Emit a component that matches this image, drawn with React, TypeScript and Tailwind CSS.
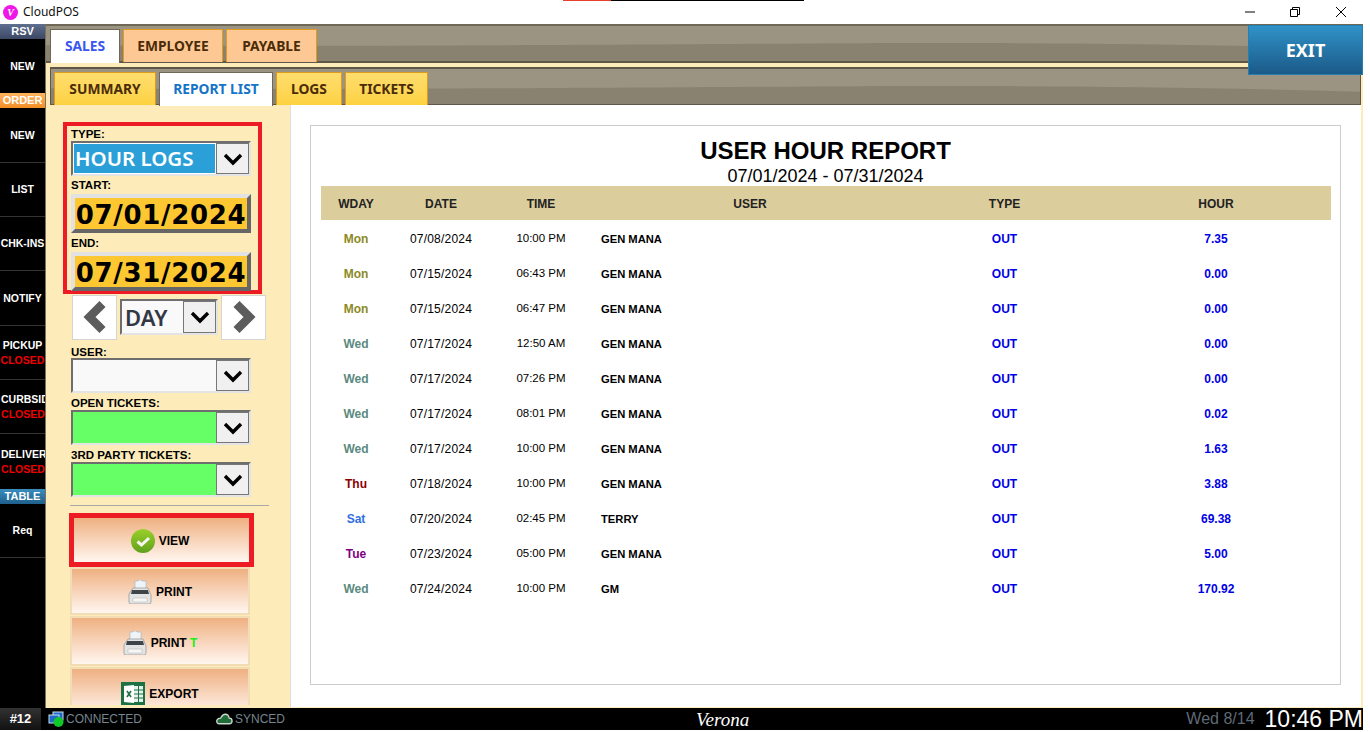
import type { ReactNode } from "react";

const SIDE_FONT = "font-['Liberation_Sans',sans-serif]";
const UI_FONT = "font-['Noto_Sans',sans-serif]";

const rows = [
	{ day: "Mon", color: "text-[#8c8a24]", date: "07/08/2024", time: "10:00 PM", user: "GEN MANA", hour: "7.35" },
	{ day: "Mon", color: "text-[#8c8a24]", date: "07/15/2024", time: "06:43 PM", user: "GEN MANA", hour: "0.00" },
	{ day: "Mon", color: "text-[#8c8a24]", date: "07/15/2024", time: "06:47 PM", user: "GEN MANA", hour: "0.00" },
	{ day: "Wed", color: "text-[#5a8a80]", date: "07/17/2024", time: "12:50 AM", user: "GEN MANA", hour: "0.00" },
	{ day: "Wed", color: "text-[#5a8a80]", date: "07/17/2024", time: "07:26 PM", user: "GEN MANA", hour: "0.00" },
	{ day: "Wed", color: "text-[#5a8a80]", date: "07/17/2024", time: "08:01 PM", user: "GEN MANA", hour: "0.02" },
	{ day: "Wed", color: "text-[#5a8a80]", date: "07/17/2024", time: "10:00 PM", user: "GEN MANA", hour: "1.63" },
	{ day: "Thu", color: "text-[#8b0000]", date: "07/18/2024", time: "10:00 PM", user: "GEN MANA", hour: "3.88" },
	{ day: "Sat", color: "text-[#2f6fe0]", date: "07/20/2024", time: "02:45 PM", user: "TERRY", hour: "69.38" },
	{ day: "Tue", color: "text-[#800080]", date: "07/23/2024", time: "05:00 PM", user: "GEN MANA", hour: "5.00" },
	{ day: "Wed", color: "text-[#5a8a80]", date: "07/24/2024", time: "10:00 PM", user: "GM", hour: "170.92" },
];

function Wave() {
	return (
		<svg
			className="absolute inset-0 h-full w-full"
			viewBox="0 0 1300 40"
			preserveAspectRatio="none"
		>
			<path
				d="M0 22 C 300 24 600 21 760 20 C 900 19 1100 19 1300 26 L1300 40 L0 40 Z"
				fill="#8a8270"
			/>
		</svg>
	);
}

function SideHeader({ label, className }: { label: string; className: string }) {
	return (
		<div
			className={`flex h-[15px] items-center justify-center text-[11px] font-bold text-white ${className}`}
		>
			{label}
		</div>
	);
}

function SideItem({
	label,
	closed,
	height = "h-[54px]",
	line = true,
	left,
}: {
	label: string;
	closed?: boolean;
	height?: string;
	line?: boolean;
	left?: boolean;
}) {
	return (
		<div
			className={`flex flex-col justify-center overflow-hidden whitespace-nowrap text-[10.5px] font-bold leading-[15px] text-white ${height} ${line ? "border-b border-[#333]" : ""} ${left ? "pl-px text-left" : "text-center"}`}
		>
			<span>{label}</span>
			{closed && <span className="text-center text-[#f00000]">CLOSED</span>}
		</div>
	);
}

function TopTab({
	label,
	active,
	width,
	text,
	bg,
	border,
}: {
	label: string;
	active?: boolean;
	width: string;
	text: string;
	bg: string;
	border: string;
}) {
	return (
		<div
			className={`relative z-10 flex items-center justify-center border border-b-0 text-[13.8px] font-bold ${UI_FONT} ${width} ${text} ${bg} ${border} ${active ? "h-[34px]" : "h-[33px]"}`}
		>
			{label}
		</div>
	);
}

function Chevron() {
	return (
		<svg viewBox="0 0 20 14" className="h-[14px] w-[20px]">
			<path d="M2 3 L10 11 L18 3" fill="none" stroke="#000" strokeWidth="3.4" />
		</svg>
	);
}

function Select({
	bg,
	width = "w-[180px]",
	height = "h-[35px]",
	arrow = "w-[33px]",
	children,
}: {
	bg: string;
	width?: string;
	height?: string;
	arrow?: string;
	children?: ReactNode;
}) {
	return (
		<div
			className={`flex border-2 border-b-[#e4e4e4] border-l-[#6e6e6e] border-r-[#e4e4e4] border-t-[#6e6e6e] ${width} ${height}`}
		>
			<div className={`min-w-0 flex-1 overflow-hidden ${bg}`}>{children}</div>
			<div
				className={`flex shrink-0 items-center justify-center border border-[#777] bg-[#f0f0f0] ${arrow}`}
			>
				<Chevron />
			</div>
		</div>
	);
}

function DateBox({ value }: { value: string }) {
	return (
		<div className="flex h-[39px] w-[180px] items-center justify-center whitespace-nowrap border-4 border-b-[#666] border-l-[#e2e2e2] border-r-[#666] border-t-[#e2e2e2] bg-[#fdc731] pt-[3px] font-['DejaVu_Sans',sans-serif] text-[26px] font-bold tracking-[0.7px] text-black">
			{value}
		</div>
	);
}

function Label({ text, height }: { text: string; height: string }) {
	return (
		<div
			className={`flex items-center text-[11.5px] font-bold leading-none text-black ${SIDE_FONT} ${height}`}
		>
			{text}
		</div>
	);
}

function Pager({ dir }: { dir: "left" | "right" }) {
	return (
		<div className="flex h-[45px] w-[45px] shrink-0 items-center justify-center border border-[#d4d4d4] bg-white">
			<svg viewBox="0 0 24 32" className="h-[32px] w-[24px]">
				<path
					d={dir === "left" ? "M19.5 3 L6.5 16 L19.5 29" : "M4.5 3 L17.5 16 L4.5 29"}
					fill="none"
					stroke="#5c5c5c"
					strokeWidth="8.5"
				/>
			</svg>
		</div>
	);
}

function Printer() {
	return (
		<svg viewBox="0 0 24 24" className="h-[24px] w-[24px]">
			<path d="M7 1 H10 L11 0 H13 L14 1 H18 V9 H7 Z" fill="#eef4f8" stroke="#9fb4c4" strokeWidth="0.6" />
			<path d="M5 8 H20 L23 15 V22 Q23 24 21 24 H3 Q1 24 1 22 V14 Z" fill="#e4e4e4" stroke="#8f8f8f" strokeWidth="0.7" />
			<path d="M4 10 H20 L21 14 H3 Z" fill="#3f4448" />
			<rect x="5" y="18" width="14" height="4" rx="0.5" fill="#f6f6f6" stroke="#b0b0b0" strokeWidth="0.5" />
		</svg>
	);
}

function Excel() {
	return (
		<svg viewBox="0 0 24 24" className="h-[24px] w-[24px]">
			<rect width="24" height="24" fill="#1d7245" />
			<path d="M13 4 H22 V20 H13 Z" fill="#e8f2ec" />
			<path
				d="M13 8 H22 M13 12 H22 M13 16 H22 M17.5 4 V20"
				stroke="#1d7245"
				strokeWidth="1"
			/>
			<path d="M3 4 L13 3 V21 L3 20 Z" fill="#fff" />
			<path d="M6 9 L10 15 M10 9 L6 15" stroke="#1d7245" strokeWidth="1.6" />
		</svg>
	);
}

function Check() {
	return (
		<svg viewBox="0 0 24 24" className="h-[24px] w-[24px]">
			<defs>
				<linearGradient id="view-check" x1="0" y1="0" x2="0" y2="1">
					<stop offset="0" stopColor="#9ad02a" />
					<stop offset="1" stopColor="#62a01c" />
				</linearGradient>
			</defs>
			<circle cx="12" cy="12" r="12" fill="url(#view-check)" />
			<path d="M6.5 12.5 L10.5 16 L18 9" fill="none" stroke="#f4f6f0" strokeWidth="3" />
		</svg>
	);
}

function ActionButton({
	height,
	children,
}: {
	height: string;
	children: ReactNode;
}) {
	return (
		<div
			className={`ml-[24px] flex w-[180px] shrink-0 items-center justify-center gap-[4px] border-2 border-[#f1dcb4] bg-gradient-to-b from-[#eeb081] to-[#fff6f0] text-[12px] font-bold text-black ${SIDE_FONT} ${height}`}
		>
			{children}
		</div>
	);
}

function ReportTable() {
	return (
		<div className={`ml-[10px] mr-[9px] text-[12px] text-black ${SIDE_FONT}`}>
			<div className="grid h-[34px] grid-cols-[70px_100px_100px_318px_191px_230px] items-center bg-[#dccd9c] pt-px text-center font-bold text-[#222]">
				<div>WDAY</div>
				<div>DATE</div>
				<div>TIME</div>
				<div>USER</div>
				<div>TYPE</div>
				<div className="pl-[2px]">HOUR</div>
			</div>
			{rows.map((r, i) => (
				<div
					key={i}
					className="grid h-[35px] grid-cols-[70px_100px_100px_318px_191px_230px] items-center pt-[2px] text-center"
				>
					<div className={`font-bold ${r.color}`}>{r.day}</div>
					<div className="tracking-[0.2px]">{r.date}</div>
					<div className="text-[11.5px]">{r.time}</div>
					<div className="pl-[10px] pt-px text-left text-[11.2px] font-bold">{r.user}</div>
					<div className="font-bold text-[#0000e6]">OUT</div>
					<div className="pl-[2px] font-bold text-[#0000e6]">{r.hour}</div>
				</div>
			))}
		</div>
	);
}

export default function App() {
	return (
		<div className="relative h-[732px] w-[1370px] overflow-hidden bg-white">
			<div className="absolute left-[563px] top-0 h-px w-[48px] bg-[#e8402a]" />
			<div className="absolute left-[611px] top-0 h-px w-[193px] bg-black" />

			<div className="w-[1363px]">
				{/* title bar */}
				<div className="flex h-[24px] items-center pl-[3px]">
					<div className="flex h-[15px] w-[15px] items-center justify-center rounded-full bg-[#f016e8] font-['Liberation_Serif',serif] text-[10px] font-bold italic text-white">
						V
					</div>
					<span className={`ml-[5px] text-[12px] text-[#111] ${UI_FONT}`}>CloudPOS</span>
					<div className="ml-auto flex items-center">
						<svg viewBox="0 0 10 10" className="h-[10px] w-[10px]">
							<path d="M0 5 H10" stroke="#000" strokeWidth="1" />
						</svg>
						<svg viewBox="0 0 10 10" className="ml-[35px] h-[10px] w-[10px]">
							<path d="M0.5 2.5 H7.5 V9.5 H0.5 Z M2.5 2.5 V0.5 H9.5 V7.5 H7.5" fill="none" stroke="#000" strokeWidth="1" />
						</svg>
						<svg viewBox="0 0 10 10" className="ml-[36px] mr-[17px] h-[10px] w-[10px]">
							<path d="M0 0 L10 10 M10 0 L0 10" stroke="#000" strokeWidth="1" />
						</svg>
					</div>
				</div>

				<div className="relative flex h-[684px]">
					{/* left rail */}
					<div className={`w-[45px] shrink-0 bg-black ${SIDE_FONT}`}>
						<SideHeader label="RSV" className="h-[14px] bg-gradient-to-b from-[#5f6f90] to-[#3c4864] text-[#e8e8f0]" />
						<SideItem label="NEW" line={false} />
						<SideHeader label="ORDER" className="bg-gradient-to-b from-[#ffb45c] to-[#f28f24]" />
						<SideItem label="NEW" height="h-[55px]" />
						<SideItem label="LIST" />
						<SideItem label="CHK-INS" />
						<SideItem label="NOTIFY" height="h-[55px]" />
						<SideItem label="PICKUP" closed />
						<SideItem label="CURBSIDE" closed left />
						<SideItem label="DELIVERY" closed left height="h-[55px]" line={false} />
						<SideHeader label="TABLE" className="bg-gradient-to-b from-[#3a8ec0] to-[#1f5f8c]" />
						<SideItem label="Req" />
					</div>

					{/* main area */}
					<div className="flex min-w-0 flex-1 flex-col border-l border-[#7a7260] bg-[#fdecb9]">
						<div className="relative h-[39px] shrink-0 border-b-2 border-t-2 border-b-[#5f5848] border-t-[#6f6857] bg-[#9c9482]">
							<Wave />
							<div className="relative flex gap-[3px] pl-[4px] pt-[3px]">
								<TopTab label="SALES" active width="w-[70px]" text="text-[#3a55f0]" bg="bg-white" border="border-[#6f6857]" />
								<TopTab label="EMPLOYEE" width="w-[100px]" text="text-[#4a2c08]" bg="bg-[#fdc894]" border="border-[#e09a1c]" />
								<TopTab label="PAYABLE" width="w-[91px]" text="text-[#4a2c08]" bg="bg-[#fdc894]" border="border-[#e09a1c]" />
							</div>
						</div>

						<div className="relative ml-[4px] mr-[2px] mt-[4px] h-[38px] shrink-0 border-x border-b border-t-2 border-[#5f5848] bg-[#9c9482]">
							<Wave />
							<div className="relative flex gap-[3px] pl-[3px] pt-[3px]">
								<TopTab label="SUMMARY" width="w-[102px]" text="text-[#4a2c08]" bg="bg-gradient-to-b from-[#fedd6e] to-[#fdd240]" border="border-[#e09a1c]" />
								<TopTab label="REPORT LIST" active width="w-[114px]" text="text-[#1573c8]" bg="bg-white" border="border-[#6f6857]" />
								<TopTab label="LOGS" width="w-[66px]" text="text-[#4a2c08]" bg="bg-gradient-to-b from-[#fedd6e] to-[#fdd240]" border="border-[#e09a1c]" />
								<TopTab label="TICKETS" width="w-[83px]" text="text-[#4a2c08]" bg="bg-gradient-to-b from-[#fedd6e] to-[#fdd240]" border="border-[#e09a1c]" />
							</div>
						</div>

						<div className="flex min-h-0 flex-1 pb-px pr-[2px]">
							{/* filter panel */}
							<div className="flex h-[600px] w-[244px] shrink-0 flex-col overflow-hidden">
								<div className="ml-[17px] mt-[17px] h-[172px] w-[199px] shrink-0 border-4 border-[#ed1c24] pl-[4px]">
									<Label text="TYPE:" height="h-[15px] pt-[2px]" />
									<Select bg="bg-[#2a9fd8] border border-white">
										<div className={`flex h-full items-center pl-[1px] text-[20.5px] font-semibold text-white ${UI_FONT}`}>
											HOUR LOGS
										</div>
									</Select>
									<Label text="START:" height="h-[18px] pt-[2px]" />
									<DateBox value="07/01/2024" />
									<Label text="END:" height="h-[19px] pt-[2px]" />
									<DateBox value="07/31/2024" />
								</div>

								<div className="ml-[26px] mt-px flex h-[44px] shrink-0 items-center gap-[3px]">
									<Pager dir="left" />
									<Select bg="bg-[#f9f9f9]" width="w-[98px]" height="h-[36px]">
										<div className={`flex h-full items-center pl-[3px] text-[22px] font-semibold text-[#333845] ${UI_FONT}`}>
											DAY
										</div>
									</Select>
									<Pager dir="right" />
								</div>

								<div className="ml-[25px] shrink-0">
									<Label text="USER:" height="h-[19px] pt-[9px]" />
									<Select bg="bg-[#f9f9f9]" />
									<Label text="OPEN TICKETS:" height="h-[17px] pt-[5px]" />
									<Select bg="bg-[#66ff66]" />
									<Label text="3RD PARTY TICKETS:" height="h-[17px] pt-[5px]" />
									<Select bg="bg-[#66ff66]" />
								</div>

								<div className="ml-[24px] mt-[8px] h-px w-[199px] shrink-0 bg-[#a8a8a8]" />

								<div className="ml-[23px] mt-[7px] h-[54px] w-[185px] shrink-0 border-[5px] border-[#ed1c24]">
									<div className={`flex h-full items-center justify-center gap-[4px] bg-gradient-to-b from-[#eeb081] to-[#fff6f0] pr-[3px] pt-[2px] text-[12px] font-bold text-black ${SIDE_FONT}`}>
										<Check />
										VIEW
									</div>
								</div>
								<ActionButton height="h-[48px] pt-[2px]">
									<Printer />
									PRINT
								</ActionButton>
								<ActionButton height="h-[50px] mt-px pt-[3px]">
									<Printer />
									<span>
										PRINT <span className="text-[#18f018]">T</span>
									</span>
								</ActionButton>
								<ActionButton height="h-[50px] mt-px pt-[3px]">
									<Excel />
									EXPORT
								</ActionButton>
							</div>

							{/* report */}
							<div className="min-w-0 flex-1 border-l border-[#dedede] bg-white pl-[19px] pr-[20px] pt-[20px]">
								<div className="h-[560px] border border-[#cccccc] bg-white">
									<div className={`pt-[10px] text-center text-black ${SIDE_FONT}`}>
										<div className="text-[24px] font-bold leading-[29px]">USER HOUR REPORT</div>
										<div className="pt-px text-[18px] leading-[20px]">07/01/2024 - 07/31/2024</div>
									</div>
									<ReportTable />
								</div>
							</div>
						</div>
					</div>

					{/* exit sits over the tab bars */}
					<div className="absolute right-0 top-[1px] flex h-[50px] w-[115px] items-center justify-center border border-[#2380b0] bg-gradient-to-b from-[#3092c8] to-[#1b5a88] font-['Noto_Sans',sans-serif] text-[18px] font-bold text-white">
						EXIT
					</div>
				</div>

				{/* status bar */}
				<div className={`flex h-[22px] items-center bg-black ${SIDE_FONT}`}>
					<div className="flex h-full w-[41px] items-center justify-center bg-gradient-to-b from-[#333] to-[#111] text-[13px] font-bold text-white">
						#12
					</div>
					<svg viewBox="0 0 16 16" className="ml-[7px] h-[16px] w-[16px]">
						<rect x="5" y="1" width="10" height="8" fill="#1e6ac8" stroke="#cde" strokeWidth="1" />
						<rect x="1" y="4" width="10" height="8" fill="#1e6ac8" stroke="#cde" strokeWidth="1" />
						<circle cx="10.5" cy="11" r="5" fill="#10c828" />
					</svg>
					<span className="ml-[2px] text-[12px] text-[#76848f]">CONNECTED</span>
					<svg viewBox="0 0 18 12" className="ml-[74px] h-[12px] w-[17px]">
						<path d="M4 11 Q0 11 1 7 Q2 5 5 5 Q7 1 10 1 Q13 1 14 5 Q17 5 17 8 Q17 11 14 11 Z" fill="#1f6e3a" stroke="#cfd6cf" strokeWidth="1.4" />
					</svg>
					<span className="ml-[2px] text-[12px] text-[#76848f]">SYNCED</span>
					<span className="ml-[411px] font-['Liberation_Serif',serif] text-[19px] italic leading-none text-white">Verona</span>
					<span className="ml-auto text-[16px] text-[#5f6a75]">Wed 8/14</span>
					<span className="ml-[10px] text-[23px] leading-none text-white">10:46 PM</span>
				</div>
			</div>
		</div>
	);
}
